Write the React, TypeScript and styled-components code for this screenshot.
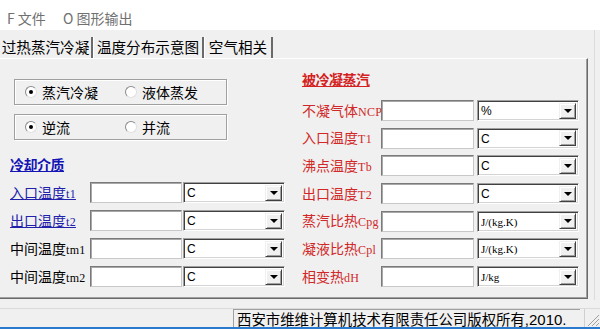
import React from "react";
import styled, { createGlobalStyle } from "styled-components";

const GlobalStyle = createGlobalStyle`
  html, body { margin: 0; padding: 0; }
  body {
    width: 600px;
    height: 329px;
    overflow: hidden;
    background: #f0f0f0;
    font-family: "Noto Sans CJK SC", "Liberation Sans", sans-serif;
  }
`;

const CJK = `"Noto Sans CJK SC", "Liberation Sans", sans-serif`;

const Window = styled.div`
  width: 600px;
  height: 329px;
  display: flex;
  flex-direction: column;
  background: #f0f0f0;
`;

const MenuBar = styled.div`
  height: 30px;
  flex: none;
  background: #ffffff;
  display: flex;
  align-items: flex-end;
  padding: 0 0 2px 7px;
  box-sizing: border-box;
  gap: 17px;
`;

const MenuItem = styled.span`
  font-family: ${CJK};
  font-size: 14px;
  line-height: 20px;
  color: #707070;
`;

const Main = styled.div`
  display: flex;
  flex-direction: row;
  height: 270px;
  flex: none;
`;

const TabControl = styled.div`
  width: 588px;
  display: flex;
  flex-direction: column;
`;

const TabStrip = styled.div`
  height: 28px;
  display: flex;
  align-items: flex-end;
`;

const Tab = styled.div<{ $w: number; $active?: boolean }>`
  width: ${(p) => p.$w}px;
  height: 21px;
  box-sizing: border-box;
  border-right: 2px solid #6a6a6a;
  border-left: ${(p) => (p.$active ? "0" : "1px solid #ffffff")};
  display: flex;
  align-items: center;
  justify-content: center;
  font-family: ${CJK};
  font-size: 14.6px;
  color: #000;
  white-space: nowrap;
  padding-bottom: 2px;
`;

const TabRest = styled.div`
  flex: 1;
  height: 21px;
`;

const Panel = styled.div`
  height: 241px;
  box-sizing: border-box;
  border-top: 1px solid #ffffff;
  border-right: 1px solid #6a6a6a;
  border-bottom: 1px solid #6a6a6a;
  box-shadow: inset -1px 0 0 #a0a0a0, inset 0 -1px 0 #a0a0a0;
  display: flex;
  flex-direction: row;
`;

const LeftCol = styled.div`
  width: 290px;
  display: flex;
  flex-direction: column;
  padding-top: 20px;
  box-sizing: border-box;
`;

const RightCol = styled.div`
  flex: 1;
  display: flex;
  flex-direction: column;
  padding-top: 11px;
  box-sizing: border-box;
`;

const GroupBox = styled.div`
  margin-left: 14px;
  width: 213px;
  height: 26px;
  box-sizing: border-box;
  border: 1px solid #a0a0a0;
  box-shadow: inset 1px 1px 0 #ffffff, 1px 1px 0 #ffffff;
  display: flex;
  align-items: center;
  margin-bottom: 9px;
`;

const RadioItem = styled.label<{ $w: number }>`
  width: ${(p) => p.$w}px;
  display: flex;
  align-items: center;
  font-family: ${CJK};
  font-size: 14px;
  color: #000;
  padding-left: 10px;
  box-sizing: border-box;
  gap: 5px;
  line-height: 20px;
`;

const RadioCircle = styled.span<{ $on?: boolean }>`
  width: 12px;
  height: 12px;
  box-sizing: border-box;
  border-radius: 50%;
  background: #ffffff;
  border: 1px solid;
  border-color: #8a8a8a #e0e0e0 #e0e0e0 #8a8a8a;
  display: flex;
  align-items: center;
  justify-content: center;
  &::after {
    content: "";
    width: 4px;
    height: 4px;
    border-radius: 50%;
    background: ${(p) => (p.$on ? "#000" : "transparent")};
  }
`;

const Heading = styled.div<{ $color: string; $left: number; $mt: number }>`
  color: ${(p) => p.$color};
  margin-left: ${(p) => p.$left}px;
  margin-top: ${(p) => p.$mt}px;
  font-family: ${CJK};
  font-weight: bold;
  font-size: 14px;
  line-height: 18px;
  text-decoration: underline;
  letter-spacing: -0.5px;
`;

const Rows = styled.div<{ $gap: number; $mt: number; $left: number }>`
  display: flex;
  flex-direction: column;
  gap: ${(p) => p.$gap}px;
  margin-top: ${(p) => p.$mt}px;
  padding-left: ${(p) => p.$left}px;
`;

const Row = styled.div`
  display: flex;
  align-items: center;
  height: 21px;
`;

const Label = styled.span<{ $color: string; $w: number; $link?: boolean }>`
  width: ${(p) => p.$w}px;
  flex: none;
  color: ${(p) => p.$color};
  font-family: ${CJK};
  font-size: 14px;
  white-space: nowrap;
  text-decoration: ${(p) => (p.$link ? "underline" : "none")};
  line-height: 20px;
`;

const Ascii = styled.span`
  font-family: "Liberation Serif", serif;
  font-size: 12px;
  font-weight: normal;
  letter-spacing: 0.3px;
`;

const TextBox = styled.div<{ $w: number }>`
  width: ${(p) => p.$w}px;
  height: 21px;
  box-sizing: border-box;
  background: #ffffff;
  border: 1px solid;
  border-color: #7a7a7a #c8c8c8 #c8c8c8 #7a7a7a;
  box-shadow: inset 1px 1px 0 #a8a8a8;
  flex: none;
`;

const Combo = styled.div<{ $ml: number }>`
  margin-left: ${(p) => p.$ml}px;
  width: 102px;
  height: 21px;
  box-sizing: border-box;
  background: #ffffff;
  border: 1px solid;
  border-color: #a0a0a0 #ffffff #ffffff #a0a0a0;
  box-shadow: inset 1px 1px 0 #404040, inset -1px -1px 0 #d4d4d4;
  display: flex;
  align-items: center;
  padding: 2px 2px 2px 3px;
  flex: none;
`;

const ComboText = styled.span<{ $serif?: boolean }>`
  flex: 1;
  font-family: ${(p) => (p.$serif ? `"Liberation Serif", serif` : `"Liberation Sans", sans-serif`)};
  font-size: ${(p) => (p.$serif ? "11px" : "12px")};
  color: #000;
  line-height: 16px;
  padding-top: 1px;
`;

const DropButton = styled.div`
  width: 17px;
  height: 16px;
  box-sizing: border-box;
  background: #f0f0f0;
  border: 1px solid;
  border-color: #f0f0f0 #404040 #404040 #f0f0f0;
  box-shadow: inset 1px 1px 0 #ffffff, inset -1px -1px 0 #a0a0a0;
  display: flex;
  align-items: center;
  justify-content: center;
  &::after {
    content: "";
    width: 0;
    height: 0;
    border-left: 4px solid transparent;
    border-right: 4px solid transparent;
    border-top: 4px solid #000;
  }
`;

const RightEdge = styled.div`
  flex: 1;
  box-sizing: border-box;
  border-right: 3px solid #f0f0f0;
  box-shadow: inset -1px 0 0 #dcdcdc;
  margin-right: 2px;
`;

const StatusBar = styled.div`
  margin-top: 8px;
  height: 19px;
  flex: none;
  display: flex;
  border-top: 1px solid #dadada;
  box-sizing: border-box;
`;

const StatusLeft = styled.div`
  width: 233px;
  flex: none;
`;

const StatusText = styled.div`
  width: 347px;
  flex: none;
  box-sizing: border-box;
  border-left: 1px solid #a0a0a0;
  border-top: 1px solid #a0a0a0;
  font-family: ${CJK};
  font-size: 14.4px;
  line-height: 18px;
  padding-left: 3px;
  color: #000;
  white-space: nowrap;
`;

const StatusAscii = styled.span`
  font-family: "Liberation Sans", sans-serif;
  font-size: 15px;
`;

const Grip = styled.div`
  flex: 1;
  display: flex;
  align-items: flex-end;
  justify-content: flex-end;
  border-left: 1px solid #d0d0d0;
  margin-left: 4px;
`;

const BlueLine = styled.div`
  height: 2px;
  flex: none;
  background: #2a7ad0;
`;

type ComboProps = { value: string; serif?: boolean; ml: number };
const ComboBox: React.FC<ComboProps> = ({ value, serif, ml }) => (
  <Combo $ml={ml}>
    <ComboText $serif={serif}>{value}</ComboText>
    <DropButton />
  </Combo>
);

const leftRows = [
  { cjk: "入口温度", asc: "t1", link: true, unit: "C" },
  { cjk: "出口温度", asc: "t2", link: true, unit: "C" },
  { cjk: "中间温度", asc: "tm1", link: false, unit: "C" },
  { cjk: "中间温度", asc: "tm2", link: false, unit: "C" },
];

const rightRows = [
  { cjk: "不凝气体", asc: "NCP", unit: "%", serif: false },
  { cjk: "入口温度", asc: "T1", unit: "C", serif: false },
  { cjk: "沸点温度", asc: "Tb", unit: "C", serif: false },
  { cjk: "出口温度", asc: "T2", unit: "C", serif: false },
  { cjk: "蒸汽比热", asc: "Cpg", unit: "J/(kg.K)", serif: true },
  { cjk: "凝液比热", asc: "Cpl", unit: "J/(kg.K)", serif: true },
  { cjk: "相变热", asc: "dH", unit: "J/kg", serif: true },
];

export default function App() {
  return (
    <>
      <GlobalStyle />
      <Window>
        <MenuBar>
          <MenuItem>F 文件</MenuItem>
          <MenuItem>O 图形输出</MenuItem>
        </MenuBar>
        <Main>
          <TabControl>
            <TabStrip>
              <Tab $w={93} $active>过热蒸汽冷凝</Tab>
              <Tab $w={111}>温度分布示意图</Tab>
              <Tab $w={69}>空气相关</Tab>
              <TabRest />
            </TabStrip>
            <Panel>
              <LeftCol>
                <GroupBox>
                  <RadioItem $w={100}>
                    <RadioCircle $on />
                    <span>蒸汽冷凝</span>
                  </RadioItem>
                  <RadioItem $w={100}>
                    <RadioCircle />
                    <span>液体蒸发</span>
                  </RadioItem>
                </GroupBox>
                <GroupBox>
                  <RadioItem $w={100}>
                    <RadioCircle $on />
                    <span>逆流</span>
                  </RadioItem>
                  <RadioItem $w={100}>
                    <RadioCircle />
                    <span>并流</span>
                  </RadioItem>
                </GroupBox>
                <Heading $color="#1414b4" $left={10} $mt={6}>冷却介质</Heading>
                <Rows $gap={7} $mt={9} $left={10}>
                  {leftRows.map((r, i) => (
                    <Row key={i}>
                      <Label $color={r.link ? "#2020aa" : "#000"} $w={80} $link={r.link}>
                        {r.cjk}
                        <Ascii>{r.asc}</Ascii>
                      </Label>
                      <TextBox $w={92} />
                      <ComboBox value={r.unit} ml={1} />
                    </Row>
                  ))}
                </Rows>
              </LeftCol>
              <RightCol>
                <Heading $color="#d42020" $left={12} $mt={0}>被冷凝蒸汽</Heading>
                <Rows $gap={6.7} $mt={12} $left={12}>
                  {rightRows.map((r, i) => (
                    <Row key={i}>
                      <Label $color="#d02828" $w={79}>
                        {r.cjk}
                        <Ascii>{r.asc}</Ascii>
                      </Label>
                      <TextBox $w={93} />
                      <ComboBox value={r.unit} serif={r.serif} ml={3} />
                    </Row>
                  ))}
                </Rows>
              </RightCol>
            </Panel>
          </TabControl>
          <RightEdge />
        </Main>
        <StatusBar>
          <StatusLeft />
          <StatusText>
            西安市维维计算机技术有限责任公司版权所有<StatusAscii>,2010.</StatusAscii>
          </StatusText>
          <Grip>
            <svg width="14" height="14" viewBox="0 0 14 14">
              <g stroke="#a0a0a0" strokeWidth="1">
                <line x1="13" y1="2" x2="2" y2="13" />
                <line x1="13" y1="6" x2="6" y2="13" />
                <line x1="13" y1="10" x2="10" y2="13" />
              </g>
            </svg>
          </Grip>
        </StatusBar>
        <BlueLine />
      </Window>
    </>
  );
}
